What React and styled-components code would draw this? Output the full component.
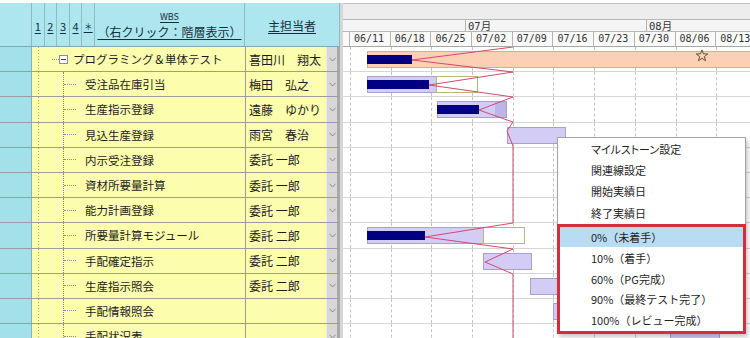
import React from "react";
import styled, { createGlobalStyle } from "styled-components";

const GlobalStyle = createGlobalStyle`
  html, body { margin: 0; padding: 0; background: #fff; overflow: hidden; }
  body { font-family: "Noto Sans CJK JP", "Noto Sans", sans-serif; color: #1c1c1c; }
  * { box-sizing: border-box; }
`;

const ROW_H = 25.2;
const G0 = 343; // gantt origin x on page
const WEEK = 40.7;

const Frame = styled.div`
  position: relative;
  display: flex;
  align-items: flex-start;
  width: 750px;
  height: 338px;
  padding-top: 3px;
  overflow: hidden;
  background: #fff;
`;

/* ---------- left pane ---------- */
const LeftPane = styled.div`
  flex: none;
  width: 340px;
  display: flex;
  flex-direction: column;
`;

const Header = styled.div`
  flex: none;
  height: 44px;
  display: grid;
  grid-template-columns: 32px repeat(5, 12.6px) 150px 95px;
  background: #ade6ee;
  border-bottom: 1px solid #7fa9b0;
`;

const HeadCell = styled.div`
  border-right: 1px solid #8dbcc4;
  display: flex;
  flex-direction: column;
  align-items: center;
  justify-content: center;
  padding-top: ${(p) => p.$pt || 0}px;
  color: #12303c;
`;

const HeadLink = styled.span`
  font-size: ${(p) => p.$size || 12}px;
  line-height: 1.1;
  text-decoration: underline;
  text-underline-offset: 2px;
  white-space: nowrap;
`;

const Row = styled.div`
  height: ${ROW_H}px;
  flex: none;
  display: grid;
  grid-template-columns: 32px 213px 81px 14px;
  border-bottom: 1px solid #9c9c9c;
`;

const IndexCell = styled.div`
  background: #a3e1ea;
  border-right: 1px solid #86b4bb;
`;

const TaskCell = styled.div`
  display: flex;
  align-items: center;
  background: repeating-linear-gradient(to bottom, #a8a890 0 1px, transparent 1px 3px) 6px 0 / 1px 100% no-repeat, #fdfdae;
  font-size: 11.5px;
  white-space: nowrap;
  overflow: hidden;
`;

const Indent = styled.span`
  flex: none;
  width: ${(p) => p.$w}px;
`;

const Connector = styled.span`
  flex: none;
  width: ${(p) => p.$w}px;
  border-top: 1px dotted #8a8a8a;
`;

const ExpandBox = styled.span`
  flex: none;
  width: 9px;
  height: 9px;
  border: 1px solid #8c8c8c;
  background: #fff;
  display: flex;
  align-items: center;
  justify-content: center;
  margin-right: 5px;
  &::before {
    content: "";
    width: 5px;
    border-top: 1px solid #404040;
  }
`;

const Elbow = styled.span`
  flex: none;
  align-self: stretch;
  display: flex;
  align-items: center;
  border-left: 1px dotted #8a8a8a;
  margin-right: 9px;
`;

const NameCell = styled.div`
  background: #fdfdae;
  border-left: 1px solid #9c9c9c;
  display: flex;
  align-items: center;
  padding-left: 3px;
  font-size: 12px;
  white-space: nowrap;
  overflow: hidden;
`;

const DropCell = styled.div`
  background: #d8d8d8;
  border-left: 1px solid #ececec;
  border-right: 3px solid #a9a9a9;
  display: flex;
  align-items: center;
  justify-content: center;
  color: #8a8a8a;
`;

const Splitter = styled.div`
  flex: none;
  align-self: stretch;
  width: 3px;
  background: #d6d6d6;
`;

/* ---------- gantt pane ---------- */
const GanttPane = styled.div`
  flex: 1;
  min-width: 0;
  display: flex;
  flex-direction: column;
  overflow: hidden;
`;

const TopBand = styled.div`
  height: 16px;
  flex: none;
  background: #ededed;
  border-top: 1px solid #c2c2c2;
`;

const MonthRow = styled.div`
  height: 13px;
  flex: none;
  display: flex;
  background: #f5f5f5;
  border-top: 1px solid #b8b8b8;
  border-bottom: 1px solid #b8b8b8;
`;

const MonthCell = styled.div`
  flex: none;
  width: ${(p) => p.$w}px;
  border-right: 1px solid #b0b0b0;
  font-family: "DejaVu Sans Mono", "Noto Sans CJK JP", monospace;
  font-size: 10.5px;
  line-height: 12px;
  padding-left: 2px;
  color: #333;
  white-space: nowrap;
`;

const WeekRow = styled.div`
  height: 15px;
  flex: none;
  display: flex;
  background: #fafafa;
  border-bottom: 1px solid #a8a8a8;
`;

const WeekCell = styled.div`
  flex: none;
  width: ${(p) => p.$w}px;
  border-right: 1px solid #b4b4b4;
  font-family: "DejaVu Sans Mono", monospace;
  font-size: 10px;
  line-height: 14px;
  padding-left: 4px;
  color: #333;
  white-space: nowrap;
  overflow: hidden;
`;

const GanttBody = styled.div`
  position: relative;
  flex: none;
`;

const GanttRow = styled.div`
  position: relative;
  flex: none;
  height: ${ROW_H}px;
  display: flex;
  border-bottom: 1px solid #d6d6d6;
`;

const Slot = styled.div`
  flex: none;
  width: ${(p) => p.$w}px;
  border-left: ${(p) => (p.$lead ? "none" : "1px dashed #c4c4c4")};
`;

const barStyles = {
  summary: "top:4px;height:17px;background:#fdd0b6;border:1px solid #e2a88c;",
  plan: "top:4px;height:17px;background:#d3ccf4;border:1px solid #a7a1cf;",
  dark: "top:5px;height:15px;background:#bdb5e8;",
  actual: "top:4px;height:17px;background:#fff;border:1px solid #bdb47a;",
  progress: "top:8px;height:9px;background:#000080;",
};

const Bar = styled.div`
  position: absolute;
  ${(p) => barStyles[p.$kind]}
`;

const Star = styled.svg`
  position: absolute;
  top: 2px;
  width: 14px;
  height: 13px;
`;

const Lightning = styled.svg`
  position: absolute;
  left: 0;
  top: 0;
  width: 407px;
  height: 291px;
  pointer-events: none;
`;

/* ---------- context menu ---------- */
const Menu = styled.div`
  position: absolute;
  left: 557px;
  top: 137px;
  width: 189px;
  background: #fff;
  border: 1px solid #a4a4a4;
  box-shadow: 2px 3px 4px rgba(0, 0, 0, 0.22);
  font-size: 11px;
`;

const MenuItem = styled.div`
  height: ${(p) => (p.$compact ? 20.8 : 21.4)}px;
  display: flex;
  align-items: center;
  padding-left: ${(p) => (p.$compact ? 31 : 33)}px;
  background: ${(p) => (p.$active ? "#b8dcf2" : "transparent")};
  color: #1e1e1e;
  white-space: nowrap;
  font-feature-settings: ${(p) => (p.$compact ? "normal" : '"palt"')};
`;

const MenuGroup = styled.div`
  margin: 0 -1px -1px -1px;
  border: 3px solid #d22f3d;
`;

/* ---------- data ---------- */
const rows = [
  {
    task: "プログラミング＆単体テスト", name: "喜田川　翔太", level: 0,
    bars: [["summary", 367, 760], ["progress", 367, 412]], star: 695,
  },
  { task: "受注品在庫引当", name: "梅田　弘之", bars: [["plan", 367, 437], ["actual", 436, 478], ["progress", 367, 429]] },
  { task: "生産指示登録", name: "遠藤　ゆかり", bars: [["plan", 437, 507], ["dark", 495, 506], ["progress", 437, 479]] },
  { task: "見込生産登録", name: "雨宮　春治", bars: [["plan", 507, 566]] },
  { task: "内示受注登録", name: "委託 一郎", bars: [] },
  { task: "資材所要量計算", name: "委託 一郎", bars: [] },
  { task: "能力計画登録", name: "委託 一郎", bars: [] },
  { task: "所要量計算モジュール", name: "委託 二郎", bars: [["plan", 367, 484], ["actual", 483, 525], ["progress", 367, 425]] },
  { task: "手配確定指示", name: "委託 二郎", bars: [["plan", 483, 532]] },
  { task: "生産指示照会", name: "委託 二郎", bars: [["plan", 530, 590]] },
  { task: "手配情報照会", name: "", bars: [["plan", 553, 610]] },
  { task: "手配状況表", name: "", bars: [["plan", 670, 720]] },
];

const weeks = ["06/11", "06/18", "06/25", "07/02", "07/09", "07/16", "07/23", "07/30", "08/06", "08/13"];

const lightningPts = [
  [513, 47], [412, 60], [513, 72], [429, 85], [513, 97], [479, 110], [507, 120], [513, 122],
  [507, 131], [513, 146], [513, 223], [425, 237], [513, 249], [485, 262], [513, 274], [513, 340],
].map(([x, y]) => `${x - G0},${y - 47}`).join(" ");

const menuTop = ["マイルストーン設定", "関連線設定", "開始実績日", "終了実績日"];
const menuProgress = ["0%（未着手）", "10%（着手）", "60%（PG完成）", "90%（最終テスト完了）", "100%（レビュー完成）"];

function Chevron() {
  return (
    <svg width="7" height="5" viewBox="0 0 7 5">
      <path d="M0.5 0.8 L3.5 4 L6.5 0.8" fill="none" stroke="#8a8a8a" strokeWidth="1" />
    </svg>
  );
}

export default function App() {
  return (
    <>
      <GlobalStyle />
      <Frame>
        <LeftPane>
          <Header>
            <HeadCell />
            {["1", "2", "3", "4", "＊"].map((n) => (
              <HeadCell key={n} $pt={4}>
                <HeadLink $size={n === "＊" ? 9 : 11}>{n}</HeadLink>
              </HeadCell>
            ))}
            <HeadCell $pt={2}>
              <HeadLink $size={9}>WBS</HeadLink>
              <HeadLink $size={12} style={{ marginTop: 3 }}>（右クリック：階層表示）</HeadLink>
            </HeadCell>
            <HeadCell $pt={2}>
              <HeadLink $size={12}>主担当者</HeadLink>
            </HeadCell>
          </Header>
          {rows.map((r, i) => (
            <Row key={i}>
              <IndexCell />
              <TaskCell>
                {r.level === 0 ? (
                  <>
                    <Indent $w={20} />
                    <Connector $w={7} />
                    <ExpandBox />
                  </>
                ) : (
                  <>
                    <Indent $w={31} />
                    <Elbow>
                      <Connector $w={12} />
                    </Elbow>
                  </>
                )}
                {r.task}
              </TaskCell>
              <NameCell>{r.name}</NameCell>
              <DropCell>
                <Chevron />
              </DropCell>
            </Row>
          ))}
        </LeftPane>
        <Splitter />
        <GanttPane>
          <TopBand />
          <MonthRow>
            <MonthCell $w={123} />
            <MonthCell $w={181}>07月</MonthCell>
            <MonthCell $w={200}>08月</MonthCell>
          </MonthRow>
          <WeekRow>
            <WeekCell $w={7} />
            {weeks.map((w) => (
              <WeekCell key={w} $w={WEEK}>{w}</WeekCell>
            ))}
          </WeekRow>
          <GanttBody>
            {rows.map((r, i) => (
              <GanttRow key={i}>
                <Slot $w={7} $lead />
                {weeks.map((w) => (
                  <Slot key={w} $w={WEEK} />
                ))}
                {r.bars.map(([kind, x1, x2], j) => (
                  <Bar key={j} $kind={kind} style={{ left: x1 - G0, width: x2 - x1 }} />
                ))}
                {r.star && (
                  <Star viewBox="0 0 24 23" style={{ left: r.star - G0 }}>
                    <path
                      d="M12 1.5 L14.6 8.6 L22.2 8.8 L16.2 13.5 L18.3 20.8 L12 16.5 L5.7 20.8 L7.8 13.5 L1.8 8.8 L9.4 8.6 Z"
                      fill="none"
                      stroke="#5c4028"
                      strokeWidth="1.6"
                      strokeLinejoin="round"
                    />
                  </Star>
                )}
              </GanttRow>
            ))}
            <Lightning viewBox="0 0 407 291">
              <polyline points={lightningPts} fill="none" stroke="#d24a70" strokeWidth="1" />
            </Lightning>
          </GanttBody>
        </GanttPane>
        <Menu>
          {menuTop.map((m) => (
            <MenuItem key={m}>{m}</MenuItem>
          ))}
          <MenuGroup>
            {menuProgress.map((m, i) => (
              <MenuItem key={m} $compact $active={i === 0}>{m}</MenuItem>
            ))}
          </MenuGroup>
        </Menu>
      </Frame>
    </>
  );
}
